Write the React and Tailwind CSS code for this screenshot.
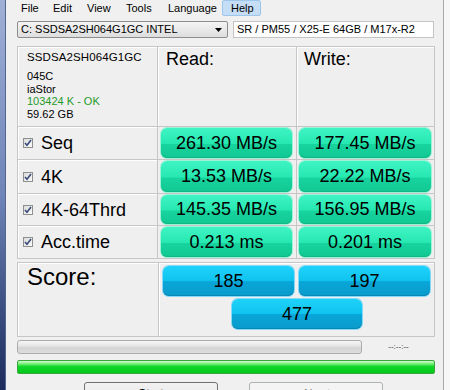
import React from "react";

const green =
  "h-full w-full rounded-[6px] bg-[linear-gradient(to_bottom,#3ff4c4_0%,#27e8b1_52%,#17d49e_55%,#12c893_100%)] shadow-[0_0_0_1px_#9bf2d6,inset_0_-1px_0_#0fb986] flex items-center justify-center text-[18px] text-black";
const blue =
  "h-[30px] rounded-[6px] bg-[linear-gradient(to_bottom,#1fd2fa_0%,#10c4f0_48%,#09a6d8_52%,#0a9bcb_100%)] shadow-[0_0_0_1px_#86d9f6,inset_0_-1px_0_#0887b4] flex items-center justify-center text-[18px] text-black";

function Check() {
  return (
    <span className="w-[10px] h-[10px] border border-[#8e8f8f] bg-gradient-to-br from-[#dcdcdc] to-[#fafafa] flex items-center justify-center">
      <svg width="8" height="8" viewBox="0 0 8 8">
        <path d="M1 4 L3 6.3 L7 1" fill="none" stroke="#3a4c7a" strokeWidth="1.6" />
      </svg>
    </span>
  );
}

const rows = [
  ["Seq", "261.30 MB/s", "177.45 MB/s"],
  ["4K", "13.53 MB/s", "22.22 MB/s"],
  ["4K-64Thrd", "145.35 MB/s", "156.95 MB/s"],
  ["Acc.time", "0.213 ms", "0.201 ms"],
];

export default function App() {
  return (
    <div className="w-[450px] h-[390px] overflow-hidden flex bg-[#f0f0f0] font-['Liberation_Sans',Arial,sans-serif] text-black">
      {/* window border left */}
      <div className="w-[6px] h-full shrink-0 bg-gradient-to-b from-[#9fb0d6] via-[#6f84b8] to-[#1b2b5c] border-r border-[#54668f]" />

      <div className="w-[437px] h-full shrink-0 flex flex-col [&>*]:shrink-0">
        {/* menu */}
        <div className="h-[16px] flex items-center text-[11px] leading-none">
          <span className="ml-[15px] w-[32px]">File</span>
          <span className="w-[34px]">Edit</span>
          <span className="w-[39px]">View</span>
          <span className="w-[42px]">Tools</span>
          <span className="w-[54px]">Language</span>
          <span className="w-[39px] h-[16px] flex items-center pl-[8px] bg-[#c6def5] border border-[#9cc6ec] rounded-[2px]">Help</span>
        </div>

        {/* drive selection */}
        <div className="mt-[5px] ml-[11px] flex gap-[5px] text-[11px]">
          <div className="w-[211px] h-[17px] flex items-center justify-between pl-[3px] pr-[5px] border border-[#8d8d8d] rounded-[2px] bg-gradient-to-b from-[#f4f4f4] to-[#dedede]">
            <span>C: SSDSA2SH064G1GC INTEL</span>
            <svg width="7" height="4" viewBox="0 0 7 4">
              <path d="M0 0 H7 L3.5 4 Z" fill="#000" />
            </svg>
          </div>
          <div className="w-[201px] h-[17px] flex items-center pl-[3px] bg-white border border-[#c4c4c4]">
            SR / PM55 / X25-E 64GB / M17x-R2
          </div>
        </div>

        {/* results table */}
        <div className="mt-[8px] ml-[11px] w-[418px] grid grid-cols-[139px_138px_137px] grid-rows-[79px_32px_33px_31px_32px] gap-px bg-[#c6c6c6] border border-[#c6c6c6]">
          <div className="bg-[#efefef] shadow-[inset_1px_1px_0_#fff] pl-[9px] pt-[3px]">
            <div className="text-[11.5px] leading-[15px] tracking-[0.1px]">SSDSA2SH064G1GC</div>
            <div className="mt-[5px] text-[11px] leading-[12.7px]">
              <div>045C</div>
              <div>iaStor</div>
              <div className="text-[#1f9a2a]">103424 K - OK</div>
              <div>59.62 GB</div>
            </div>
          </div>
          <div className="bg-[#efefef] shadow-[inset_1px_1px_0_#fff] pl-[8px] pt-[1px] text-[18px] leading-[22px]">Read:</div>
          <div className="bg-[#efefef] shadow-[inset_1px_1px_0_#fff] pl-[7px] pt-[1px] text-[18px] leading-[22px]">Write:</div>

          {rows.map((r) => (
            <React.Fragment key={r[0]}>
              <div className="bg-[#efefef] shadow-[inset_1px_1px_0_#fff] flex items-center pl-[5px] gap-[8px]">
                <Check />
                <span className="text-[18px] leading-none">{r[0]}</span>
              </div>
              <div className="bg-[#efefef] pl-[3px] pr-[4px] py-[1px]">
                <div className={green}>{r[1]}</div>
              </div>
              <div className="bg-[#efefef] pl-[2px] pr-[3px] py-[1px]">
                <div className={green}>{r[2]}</div>
              </div>
            </React.Fragment>
          ))}
        </div>

        {/* score */}
        <div className="mt-[3px] ml-[11px] w-[418px] h-[75px] grid grid-cols-[140px_1fr] gap-px bg-[#c6c6c6] border border-[#c6c6c6]">
          <div className="bg-[#efefef] shadow-[inset_1px_1px_0_#fff] pl-[9px] text-[24px] leading-[28px]">Score:</div>
          <div className="bg-[#efefef] shadow-[inset_1px_1px_0_#fff] pt-[3px] px-[4px] flex flex-col gap-[3px]">
            <div className="flex gap-[5px]">
              <div className={blue + " w-[131px]"}>185</div>
              <div className={blue + " w-[131px]"}>197</div>
            </div>
            <div className={blue + " w-[130px] ml-[69px]"}>477</div>
          </div>
        </div>

        {/* progress */}
        <div className="mt-[3px] ml-[11px] w-[418px] flex items-center">
          <div className="w-[345px] h-[14px] rounded-[3px] border border-[#acacac] bg-[linear-gradient(to_bottom,#f6f6f6_0%,#e4e4e4_45%,#d4d4d4_55%,#dedede_100%)]" />
          <div className="flex-1 text-center text-[8px] leading-none text-[#333]">--:--:--</div>
        </div>
        <div className="mt-[6px] ml-[11px] w-[418px] h-[14px] rounded-[2px] border border-[#3aa63a] bg-[linear-gradient(to_bottom,#d2fad2_0%,#7ff07f_22%,#12d82a_45%,#02c71a_100%)]" />

        {/* buttons */}
        <div className="mt-[8px] ml-[78px] flex gap-[31px] text-[12px]">
          <div className="w-[134px] h-[23px] rounded-[3px] border border-[#707070] bg-[linear-gradient(to_bottom,#f2f2f2_0%,#ebebeb_50%,#dddddd_51%,#cfcfcf_100%)] flex items-center justify-center">Start</div>
          <div className="w-[134px] h-[23px] rounded-[3px] border border-[#adb2b5] bg-[#f4f4f4] flex items-center justify-center text-[#838383]">Abort</div>
        </div>
      </div>

      {/* window border right */}
      <div className="flex-1 h-full border-l border-[#a9a9a9] bg-[#f7f7f7]" />
    </div>
  );
}
